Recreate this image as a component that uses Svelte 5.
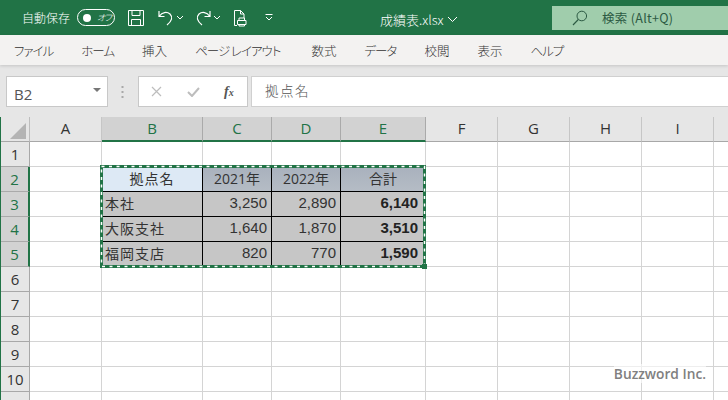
<script>
	const tabs = [
		{ t: 'ファイル', kana: true },
		{ t: 'ホーム', kana: true },
		{ t: '挿入' },
		{ t: 'ページ レイアウト', kana: true },
		{ t: '数式' },
		{ t: 'データ', kana: true },
		{ t: '校閲' },
		{ t: '表示' },
		{ t: 'ヘルプ', kana: true }
	];
	const cols = ['A', 'B', 'C', 'D', 'E', 'F', 'G', 'H', 'I', ''];
	const selCols = ['B', 'C', 'D', 'E'];
	const rows = [1, 2, 3, 4, 5, 6, 7, 8, 9, 10, 11];

	const table = [
		[
			{ t: '拠点名', c: 'head first' },
			{ t: '2021年', c: 'head' },
			{ t: '2022年', c: 'head' },
			{ t: '合計', c: 'head' }
		],
		[
			{ t: '本社', c: 'name' },
			{ t: '3,250', c: 'num' },
			{ t: '2,890', c: 'num' },
			{ t: '6,140', c: 'num total' }
		],
		[
			{ t: '大阪支社', c: 'name' },
			{ t: '1,640', c: 'num' },
			{ t: '1,870', c: 'num' },
			{ t: '3,510', c: 'num total' }
		],
		[
			{ t: '福岡支店', c: 'name' },
			{ t: '820', c: 'num' },
			{ t: '770', c: 'num' },
			{ t: '1,590', c: 'num total' }
		]
	];

	function isTable(r, c) {
		return r >= 2 && r <= 5 && c >= 1 && c <= 4;
	}
</script>

<div class="window">
	<header class="titlebar">
		<div class="quick">
			<span class="autosave">自動保存</span>
			<span class="toggle"><i></i><b>オフ</b></span>
			<svg class="ico save" viewBox="0 0 18 18" width="18" height="18">
				<path d="M1.500 1.500h15v15h-15zM5 1.500v5h8v-5M4.500 16.500v-6h9v6" fill="none" stroke="#fff" stroke-width="1" />
			</svg>
			<svg class="ico undo" viewBox="0 0 18 18" width="18" height="18">
				<path d="M2 2v5.500h5.500M2.500 7C5 3 10 2.500 13 5c3 3 2 7-3 11" fill="none" stroke="#fff" stroke-width="1.200" />
			</svg>
			<svg class="caret" viewBox="0 0 8 5" width="8" height="5"><path d="M1 1l3 3 3-3" fill="none" stroke="#fff" /></svg>
			<svg class="ico redo" viewBox="0 0 18 18" width="18" height="18">
				<path d="M16 2v5.500h-5.500M15.500 7C13 3 8 2.500 5 5c-3 3-2 7 3 11" fill="none" stroke="#fff" stroke-width="1.200" />
			</svg>
			<svg class="caret" viewBox="0 0 8 5" width="8" height="5"><path d="M1 1l3 3 3-3" fill="none" stroke="#fff" /></svg>
			<svg class="ico doc" viewBox="0 0 16 18" width="16" height="18">
				<path d="M2.500 16.500V1.500h6l3.500 3.500v4M8.500 1.500V5H12M5 16.500H2.500M5.500 11.500h8.500v4h-8.500zM7 11.500V9h5.500v2.500M7 15.500v1.500h5.500v-1.500" fill="none" stroke="#fff" />
			</svg>
			<svg class="more" viewBox="0 0 8 7" width="8" height="7"><path d="M0.500 0.500h7M1 3l3 3 3-3" fill="none" stroke="#fff" /></svg>
		</div>
		<div class="filename">成績表.xlsx
			<svg viewBox="0 0 11 7" width="11" height="7"><path d="M1 1l4.500 4.500L10 1" fill="none" stroke="#fff" /></svg>
		</div>
		<div class="search">
			<svg viewBox="0 0 16 16" width="16" height="16">
				<circle cx="9.800" cy="6" r="4.800" fill="none" stroke="#2c5a43" stroke-width="1" />
				<path d="M6.300 9.500L1 15" stroke="#2c5a43" stroke-width="1.100" />
			</svg>
			<span>検索 (Alt+Q)</span>
		</div>
	</header>

	<nav class="tabs">
		{#each tabs as tab}
			<span class:kana={tab.kana}>{tab.t}</span>
		{/each}
	</nav>

	<div class="formula">
		<div class="namebox">
			<span>B2</span>
			<svg viewBox="0 0 8 4" width="8" height="4"><path d="M0 0h8L4 4z" fill="#777" /></svg>
		</div>
		<svg class="dots" viewBox="0 0 3 12" width="3" height="12">
			<path d="M0.500 1h2M0.500 6h2M0.500 11h2" stroke="#a8a8a8" stroke-width="2" />
		</svg>
		<div class="fxbox">
			<svg viewBox="0 0 11 11" width="11" height="11"><path d="M1 1l9 9M10 1l-9 9" stroke="#bdbdbd" stroke-width="1.200" /></svg>
			<svg viewBox="0 0 13 11" width="13" height="11"><path d="M1 6l4 4 7-8" fill="none" stroke="#bdbdbd" stroke-width="2" /></svg>
			<em>f<small>x</small></em>
		</div>
		<div class="input">拠点名</div>
	</div>

	<div class="sheet">
		<div class="corner"><i></i></div>
		{#each cols as col}
			<div class="colhead" class:sel={selCols.includes(col)}>{col}</div>
		{/each}

		{#each rows as r}
			<div class="rowhead" class:sel={r >= 2 && r <= 5}>{r}</div>
			{#each cols as col, c}
				{#if isTable(r, c)}
					{@const cell = table[r - 2][c - 1]}
					<div class="cell {cell.c}">{cell.t}</div>
				{:else}
					<div class="cell"></div>
				{/if}
			{/each}
		{/each}

		<svg class="ants" viewBox="0 0 328 104" width="328" height="104">
			<rect x="1.500" y="1.500" width="323" height="100" fill="none" stroke="#217346" stroke-width="3" />
			<rect x="1.500" y="1.500" width="323" height="100" fill="none" stroke="#fff" stroke-width="1.500" stroke-dasharray="3 4.500" />
			<rect x="322" y="99" width="5" height="5" fill="#217346" />
		</svg>
	</div>

	<div class="mark">Buzzword Inc.</div>
</div>

<style>
	:global(body) {
		margin: 0;
	}

	.window {
		position: relative;
		width: 728px;
		height: 400px;
		overflow: hidden;
		background: #e6e6e6;
		font-family: 'Noto Sans CJK JP', 'Noto Sans', sans-serif;
		font-feature-settings: 'palt';
		display: flex;
		flex-direction: column;
	}

	.titlebar {
		height: 35px;
		flex: none;
		background: #217346;
		color: #fff;
		display: flex;
		position: relative;
	}

	.quick {
		display: flex;
		align-items: center;
		height: 35px;
		padding-left: 22px;
		width: 356px;
		box-sizing: border-box;
	}

	.autosave {
		font-size: 12px;
		font-weight: 300;
		width: 55px;
		white-space: nowrap;
	}

	.toggle {
		width: 36px;
		height: 15px;
		border: 1px solid #fff;
		border-radius: 9px;
		display: flex;
		align-items: center;
		margin-right: 12px;
	}

	.toggle i {
		width: 8px;
		height: 8px;
		border-radius: 50%;
		background: #fff;
		margin-left: 5px;
	}

	.toggle b {
		font-size: 9px;
		font-weight: 300;
		font-style: italic;
		margin-left: 6px;
		letter-spacing: -1px;
	}

	.ico {
		flex: none;
	}

	.save {
		margin-right: 12px;
	}

	.caret {
		margin: 0 10px 0 1px;
	}

	.doc {
		margin-left: 1px;
		margin-right: 17px;
	}

	.more {
		flex: none;
	}

	.filename {
		font-size: 13px;
		font-weight: 300;
		padding-top: 10px;
		line-height: 20px;
		margin-left: 24px;
		white-space: nowrap;
	}

	.filename svg {
		margin-left: 1px;
		vertical-align: 2px;
	}

	.search {
		position: absolute;
		left: 552px;
		top: 6px;
		width: 176px;
		height: 24px;
		background: #a0cdac;
		color: #2c5a43;
		display: flex;
		align-items: center;
		font-size: 12.500px;
		padding-left: 20px;
		box-sizing: border-box;
	}

	.search span {
		margin-left: 14px;
		margin-top: -1px;
		letter-spacing: 0.3px;
	}

	.tabs {
		height: 30px;
		flex: none;
		background: #f3f2f1;
		box-shadow: 0 1px 3px rgba(0, 0, 0, 0.15);
		position: relative;
		display: flex;
		align-items: center;
		padding-left: 14px;
		gap: 28px;
		font-size: 12.500px;
		font-weight: 300;
		color: #333;
		box-sizing: border-box;
	}

	.tabs .kana {
		letter-spacing: -1px;
	}

	.tabs span:nth-child(4) {
		margin-right: 3px;
	}

	.formula {
		height: 52px;
		flex: none;
		display: flex;
		align-items: flex-start;
		padding: 11px 0 0 6px;
		box-sizing: border-box;
	}

	.namebox {
		width: 102px;
		height: 31px;
		background: #fff;
		border: 1px solid #c8c8c8;
		box-sizing: border-box;
		display: flex;
		align-items: center;
		justify-content: space-between;
		padding: 4px 6px 0 7px;
		font-family: 'Open Sans', sans-serif;
		font-size: 15px;
		color: #555;
	}

	.namebox svg {
		margin-top: -8px;
	}

	.dots {
		margin: 10px 14px 0 13px;
	}

	.fxbox {
		width: 110px;
		height: 31px;
		background: #fff;
		border: 1px solid #c8c8c8;
		box-sizing: border-box;
		display: flex;
		align-items: center;
		padding-left: 12px;
		margin-right: 3px;
	}

	.fxbox svg:nth-child(2) {
		margin-left: 25px;
	}

	.fxbox em {
		margin-left: 24px;
		font-family: 'Liberation Serif', serif;
		font-size: 14px;
		font-weight: 700;
		color: #555;
	}

	.fxbox small {
		font-size: 10px;
	}

	.input {
		flex: 1;
		height: 31px;
		background: #fff;
		border: 1px solid #d0d0d0;
		border-right: 0;
		box-sizing: border-box;
		font-size: 13.500px;
		font-weight: 300;
		color: #555;
		padding-left: 13px;
		line-height: 26px;
		letter-spacing: 1.500px;
	}

	.sheet {
		flex: 1;
		min-height: 0;
		display: grid;
		grid-template-columns: 29px 72px 101px 69px 69px 85px 72px 72px 72px 72px 15px;
		grid-template-rows: 24.500px repeat(11, 25px);
		background: #fff;
		border-left: 1px solid #217346;
		overflow: hidden;
		position: relative;
	}

	.corner {
		background: #e6e6e6;
		border-right: 1px solid #bdbdbd;
		border-bottom: 1px solid #a8a8a8;
		box-sizing: border-box;
		position: relative;
	}

	.corner i {
		position: absolute;
		right: 3px;
		bottom: 2px;
		width: 0;
		height: 0;
		border-left: 16px solid transparent;
		border-bottom: 16px solid #b4b4b4;
	}

	.colhead {
		background: #e6e6e6;
		border-right: 1px solid #c6c6c6;
		border-bottom: 1px solid #a8a8a8;
		box-sizing: border-box;
		text-align: center;
		font-family: 'Open Sans', sans-serif;
		font-size: 15px;
		line-height: 23px;
		color: #333;
	}

	.colhead.sel {
		background: #d2d2d2;
		color: #217346;
		border-right-color: #aaa;
		border-bottom: 2px solid #217346;
	}

	.rowhead {
		background: #e6e6e6;
		border-right: 1px solid #a8a8a8;
		border-bottom: 1px solid #a8a8a8;
		box-sizing: border-box;
		text-align: center;
		font-family: 'Open Sans', sans-serif;
		font-size: 15px;
		line-height: 24px;
		color: #333;
	}

	.rowhead.sel {
		background: #d2d2d2;
		color: #217346;
		border-right: 2px solid #217346;
		border-bottom-color: #aaa;
	}

	.cell {
		border-right: 1px solid #d4d4d4;
		border-bottom: 1px solid #d4d4d4;
		box-sizing: border-box;
		font-size: 14px;
		line-height: 23px;
		color: #333;
		white-space: nowrap;
	}

	.head,
	.name,
	.num {
		border-right: 1px solid #000;
		border-bottom: 1px solid #000;
		background: #c6c6c6;
	}

	.head {
		background: linear-gradient(#a9b1bd, #b5bcc5);
		text-align: center;
		font-size: 14px;
		font-family: 'Open Sans', 'Noto Sans CJK JP', sans-serif;
	}

	.head.first {
		background: #dde9f5;
		letter-spacing: 1px;
	}

	.name {
		padding-left: 3px;
		letter-spacing: 1px;
	}

	.num {
		text-align: right;
		padding-right: 4px;
		font-family: 'Liberation Sans', sans-serif;
		font-size: 15px;
		line-height: 22px;
	}

	.total {
		font-weight: 700;
		padding-right: 7px;
		color: #222;
	}

	.ants {
		position: absolute;
		grid-column: 3 / 8;
		grid-row: 3 / 8;
		margin: -1.500px 0 0 -2px;
		z-index: 2;
	}

	.mark {
		position: absolute;
		right: 22px;
		top: 364px;
		font-family: 'Open Sans', sans-serif;
		font-size: 13.750px;
		font-weight: 600;
		color: #808080;
		background: rgba(255, 255, 255, 0.6);
	}
</style>
